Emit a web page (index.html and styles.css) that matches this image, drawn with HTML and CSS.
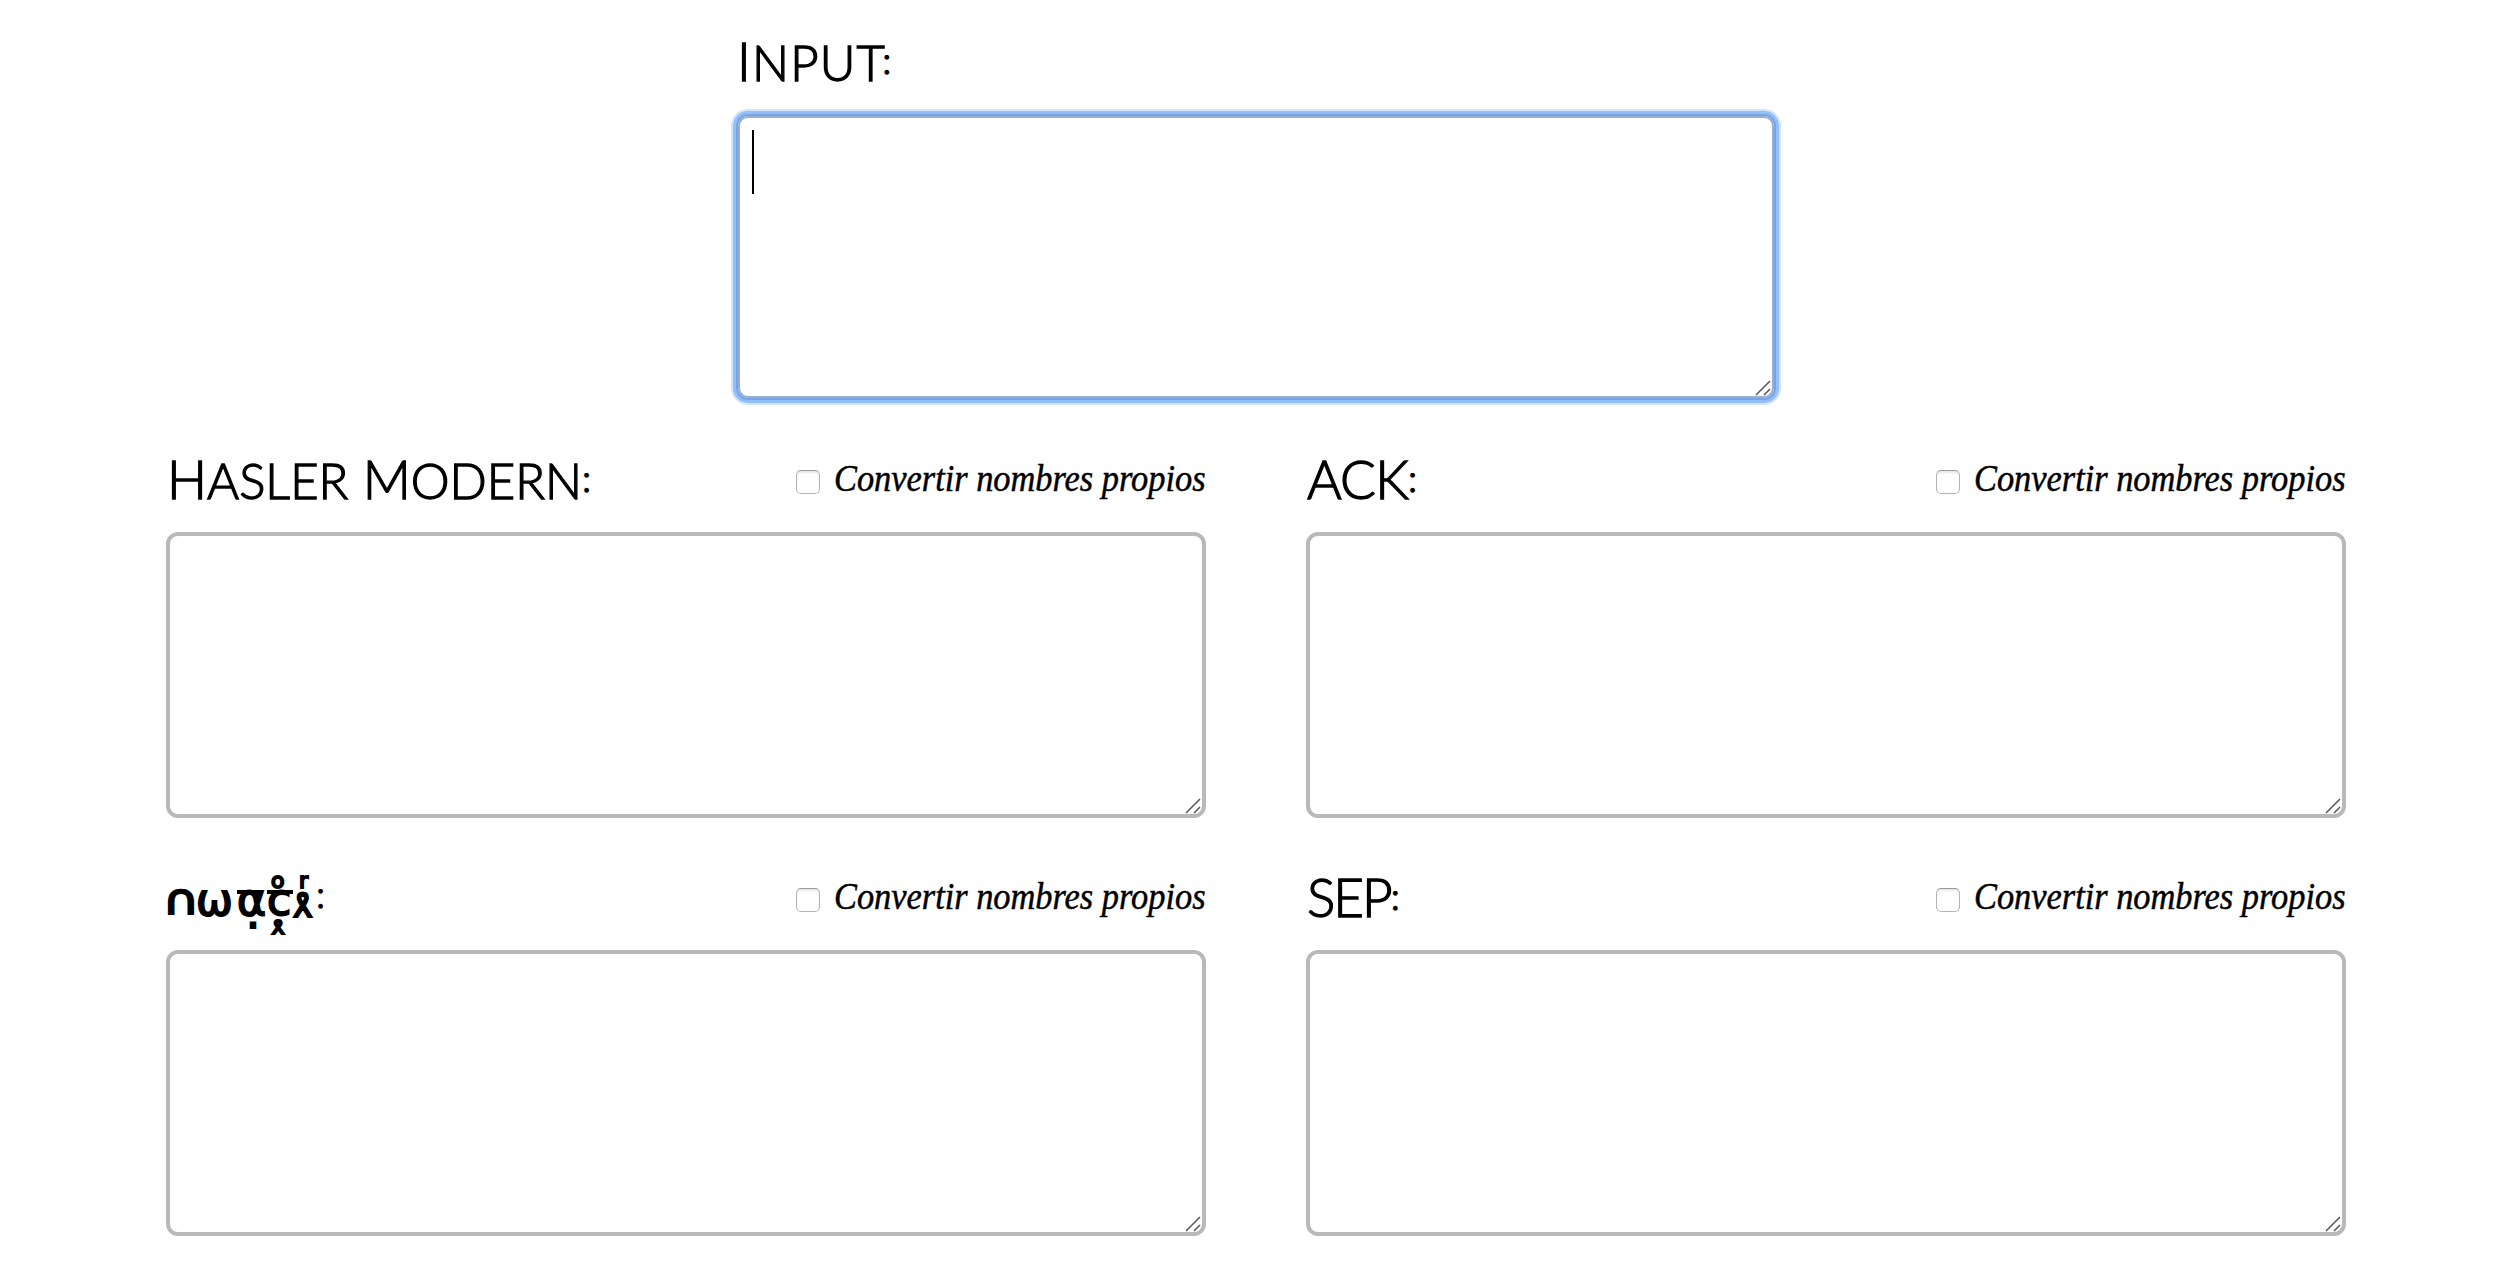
FILE: index.html
```html
<!DOCTYPE html>
<html lang="es">
<head>
<meta charset="utf-8">
<title>Input</title>
<link rel="stylesheet" href="styles.css">
</head>
<body>
<svg class="defs" width="0" height="0"><symbol id="grip" viewBox="0 0 16 16"><path d="M1 15 15 1M9 15l6-6" fill="none" stroke="#555" stroke-width="1.5"/></symbol></svg>
<main class="page">
  <section class="field field-main">
    <header class="head"><h2 class="title t-input">I<span class="sc">NPUT</span><span class="colon">:</span></h2></header>
    <div class="box focused"><textarea class="area"></textarea><i class="caret"></i><svg class="grip"><use href="#grip"/></svg></div>
  </section>
  <div class="grid">
    <section class="field">
      <header class="head"><h2 class="title t-hasler">H<span class="sc">ASLER</span> M<span class="sc">ODERN</span><span class="colon">:</span></h2><label class="opt"><input type="checkbox" class="check"><span class="opt-text">Convertir nombres propios</span></label></header>
      <div class="box"><textarea class="area"></textarea><svg class="grip"><use href="#grip"/></svg></div>
    </section>
    <section class="field">
      <header class="head"><h2 class="title t-ack">ACK<span class="colon">:</span></h2><label class="opt"><input type="checkbox" class="check"><span class="opt-text">Convertir nombres propios</span></label></header>
      <div class="box"><textarea class="area"></textarea><svg class="grip"><use href="#grip"/></svg></div>
    </section>
    <section class="field">
      <header class="head"><h2 class="title t-script"><span class="g g1">∩</span><span class="g g2">ω</span><span class="g g3 bar">α<span class="m dot">.</span></span><span class="g g4 bar">c<span class="m ring">o</span><span class="m loop">ɤ</span></span><span class="g g5"><span class="flip">ɤ</span><span class="m hook">r</span></span><span class="colon">:</span></h2><label class="opt"><input type="checkbox" class="check"><span class="opt-text">Convertir nombres propios</span></label></header>
      <div class="box"><textarea class="area"></textarea><svg class="grip"><use href="#grip"/></svg></div>
    </section>
    <section class="field">
      <header class="head"><h2 class="title t-sep">SEP<span class="colon">:</span></h2><label class="opt"><input type="checkbox" class="check"><span class="opt-text">Convertir nombres propios</span></label></header>
      <div class="box"><textarea class="area"></textarea><svg class="grip"><use href="#grip"/></svg></div>
    </section>
  </div>
</main>
</body>
</html>
```
FILE: styles.css
```css
* { box-sizing: border-box; }
body { margin: 0; background: #fff; color: #000; overflow: hidden; }
.defs { display: block; height: 0; }
.page { width: 2180px; margin-left: 166px; }
.field { width: 1040px; }
.field-main { margin: 0 auto; }
.grid { display: grid; grid-template-columns: 1040px 1040px; column-gap: 100px; }
.head { height: 114px; display: flex; align-items: flex-end; justify-content: space-between; }
.grid .head { height: 132px; }
.title { margin: 0 0 21px; font: 300 53px/64px Lato, sans-serif; white-space: nowrap; height: 64px; padding-left: 1px; -webkit-text-stroke: 1.3px #000; }
.sc { font-size: 49px; }
.colon { display: inline-block; font-size: 38px; line-height: 1; transform: translateY(-7px); }
.t-input { letter-spacing: 1.2px; }
.t-input .colon { margin-left: -4px; }
.t-ack { letter-spacing: -.8px; }
.t-sep { letter-spacing: -2px; }
.opt { display: flex; align-items: center; height: 40px; margin-bottom: 30px; }
.check { appearance: none; margin: 0 14px 0 0; width: 24px; height: 24px; border: 1px solid #b4b4b4; border-top-color: #999; border-radius: 5px; background: #fff; box-shadow: inset 0 2px 2px #e8e8e8; }
.opt-text { font: italic 38px/40px "Liberation Serif", serif; width: 372px; white-space: nowrap; -webkit-text-stroke: .5px #000; transform: translateY(-4px) scaleX(.904); transform-origin: left; }
.box { position: relative; height: 286px; }
.area { display: block; width: 100%; height: 100%; border: 4px solid #b9b9b9; border-radius: 12px; background: #fff; resize: none; outline: none; padding: 10px; font: 48px/64px Lato, sans-serif; }
.focused .area { border: 2px solid #78a5e2; box-shadow: 0 0 0 3px #92bef9, 0 0 0 5px #d2e4fb, inset 0 0 0 2px #9aafd0; }
.caret { position: absolute; left: 16px; top: 16px; width: 2px; height: 64px; background: #000; }
.grip { position: absolute; right: 5px; bottom: 4px; width: 16px; height: 16px; }
.t-script { font: 400 44px/64px "DejaVu Sans", sans-serif; display: flex; margin-bottom: 18px; -webkit-text-stroke: 2px #000; }
.g { position: relative; display: block; }
.m { position: absolute; line-height: 1; }
.g1 { width: 29px; transform: translateY(-1px) scale(1.15, .95); transform-origin: 0 48px; text-indent: -4px; }
.g2 { width: 41px; }
.g3 { width: 30px; }
.g4 { width: 26px; }
.g5 { width: 23px; }
.bar::before { content: ""; position: absolute; left: 0; top: 22px; width: 26px; height: 4px; background: #000; }
.dot { left: 9px; top: 23px; }
.ring { left: 4px; top: 2px; font-size: 22px; }
.loop { left: 4px; top: 48px; font-size: 24px; transform: rotate(180deg); }
.flip { display: block; transform: translate(-1px, 8px) scale(.82, -1); transform-origin: left; }
.hook { left: 6px; top: 2px; font-size: 22px; }
.t-script .colon { font: 300 38px/64px Lato, sans-serif; -webkit-text-stroke: 1.3px #000; }
```
